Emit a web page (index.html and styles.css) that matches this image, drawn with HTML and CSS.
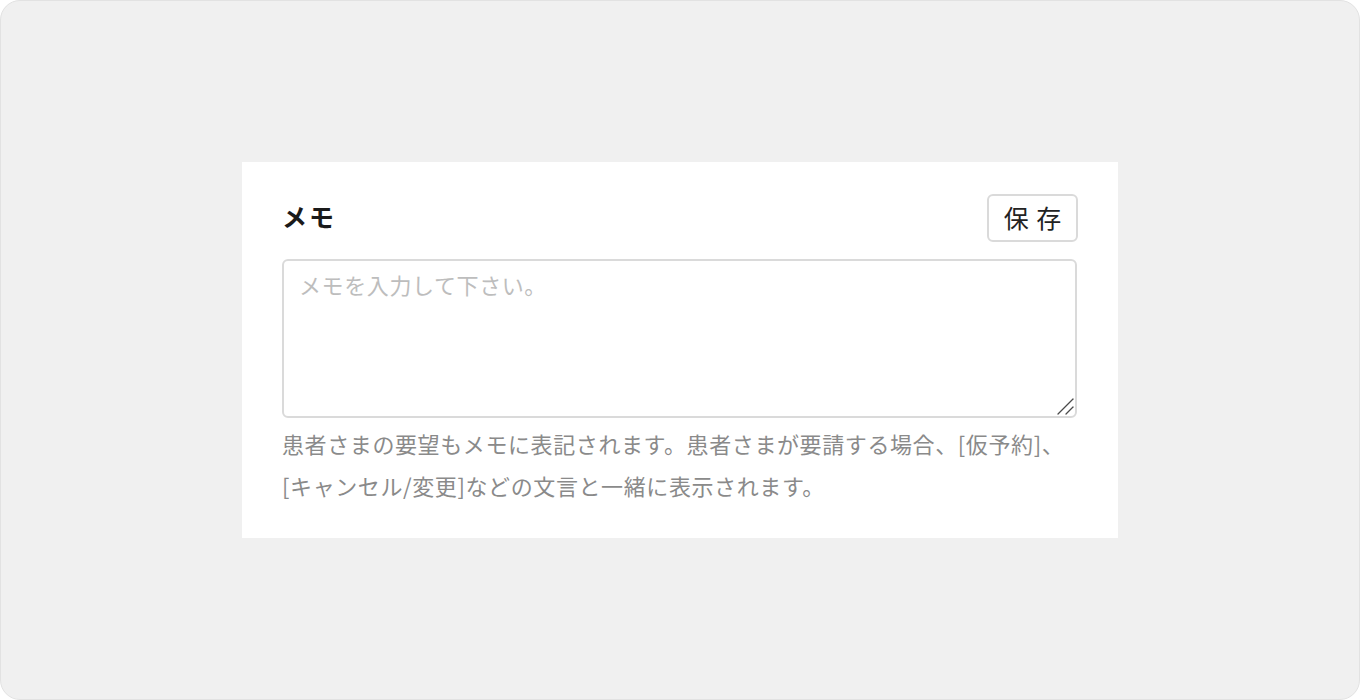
FILE: index.html
```html
<!DOCTYPE html>
<html lang="ja">
<head>
<meta charset="utf-8">
<link rel="stylesheet" href="styles.css">
</head>
<body>
<div class="frame">
  <section class="card">
    <div class="card-head">
      <h2 class="title">メモ</h2>
      <button class="save" type="button">保 存</button>
    </div>
    <div class="memo-wrap">
      <textarea class="memo" placeholder="メモを入力して下さい。"></textarea>
      <svg class="grip" width="18" height="18" viewBox="0 0 18 18" aria-hidden="true">
        <line x1="2" y1="17" x2="17" y2="2" stroke="#4a4a4a" stroke-width="1.3" stroke-linecap="round"/>
        <line x1="10" y1="17" x2="17" y2="10" stroke="#4a4a4a" stroke-width="1.3" stroke-linecap="round"/>
      </svg>
    </div>
    <p class="help">患者さまの要望もメモに表記されます。患者さまが要請する場合、[仮予約]、[キャンセル/変更]などの文言と一緒に表示されます。</p>
  </section>
</div>
</body>
</html>
```
FILE: styles.css
```css
* { box-sizing: border-box; }
html, body { margin: 0; padding: 0; background: #ffffff; }
body {
  font-family: "Noto Sans CJK JP", "Noto Sans", sans-serif;
  width: 1360px;
  height: 700px;
}
.frame {
  width: 1360px;
  height: 700px;
  background: #f0f0f0;
  border: 1px solid #e2e2e2;
  border-radius: 20px;
  display: flex;
  align-items: center;
  justify-content: center;
}
.card {
  width: 876px;
  height: 376px;
  background: #ffffff;
  padding: 32px 40px 0 40px;
  display: flex;
  flex-direction: column;
}
.card-head {
  display: flex;
  align-items: center;
  justify-content: space-between;
  height: 48px;
}
.title {
  margin: 0 0 4px 0;
  font-size: 25px;
  line-height: 1.4;
  font-weight: 700;
  letter-spacing: 2px;
  color: #1a1a1a;
}
.save {
  width: 91px;
  height: 48px;
  border: 2px solid #dadada;
  border-radius: 6px;
  background: #ffffff;
  font-family: inherit;
  font-size: 25px;
  letter-spacing: 1px;
  text-indent: 1px;
  color: #222;
  padding: 0 0 2px 0;
}
.memo-wrap {
  position: relative;
  margin-top: 17px;
  width: 795px;
  height: 159px;
}
.memo {
  display: block;
  width: 100%;
  height: 100%;
  border: 2px solid #dadada;
  border-radius: 6px;
  padding: 7px 15px;
  font-family: inherit;
  font-size: 22px;
  letter-spacing: 0.6px;
  color: #333;
  resize: none;
  outline: none;
}
.memo::placeholder { color: #bdbdbd; }
.grip {
  position: absolute;
  right: 3px;
  bottom: 3px;
  pointer-events: none;
}
.help {
  margin: 4px 0 0 0;
  font-size: 22px;
  line-height: 42px;
  letter-spacing: 0.6px;
  color: #8a8a8a;
}
```
